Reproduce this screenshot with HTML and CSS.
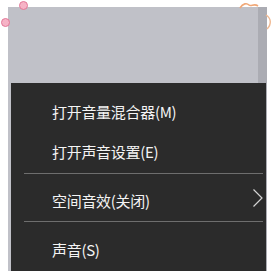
FILE: index.html
```html
<!DOCTYPE html>
<html lang="zh">
<head>
<meta charset="utf-8">
<link rel="stylesheet" href="styles.css">
</head>
<body>
<div class="stage">
  <div class="panel">
    <div class="menu">
      <div class="item">打开音量混合器(M)</div>
      <div class="item">打开声音设置(E)</div>
      <div class="sep sep-1"></div>
      <div class="item has-sub">空间音效(关闭)
        <svg class="chev" width="12" height="20" viewBox="0 0 12 20"><polyline points="1.5,1.5 10,10 1.5,18.5" fill="none" stroke="#d4d4d4" stroke-width="1.2"/></svg>
      </div>
      <div class="sep sep-2"></div>
      <div class="item">声音(S)</div>
    </div>
  </div>
  <span class="dot dot-a"></span>
  <span class="dot dot-b"></span>
  <svg class="squig squig-a" width="20" height="10" viewBox="0 0 20 10"><path d="M1 7 C4 2, 8 2, 10 4 C12 6, 15 2, 19 5" fill="none" stroke="#f0a878" stroke-width="1.6"/></svg>
  <svg class="squig squig-b" width="8" height="16" viewBox="0 0 8 16"><path d="M1 1 C6 4, 7 10, 2 15" fill="none" stroke="#f0b890" stroke-width="1.4"/></svg>
</div>
</body>
</html>
```
FILE: styles.css
```css
html, body {
  margin: 0;
  padding: 0;
  background: #ffffff;
}
body {
  width: 275px;
  height: 271px;
  overflow: hidden;
  font-family: "Noto Sans CJK SC", "Noto Sans", sans-serif;
}
.stage {
  position: relative;
  width: 275px;
  height: 271px;
  padding: 7px 0 0 8px;
  box-sizing: border-box;
}
.panel {
  width: 259px;
  height: 264px;
  box-sizing: border-box;
  background: linear-gradient(to right, #c0c1c8 0, #c0c1c8 250px, #abacb3 250px, #abacb3 259px);
  padding: 76px 0 0 3px;
  overflow: hidden;
}
.menu {
  width: 255px;
  height: 200px;
  background: #2b2b2b;
  padding-top: 8px;
  box-sizing: border-box;
  color: #f4f4f4;
}
.item {
  height: 40px;
  display: flex;
  align-items: center;
  padding-left: 41px;
  font-size: 15px;
  letter-spacing: -0.3px;
}
.has-sub {
  justify-content: space-between;
  padding-right: 2px;
}
.chev {
  display: block;
  margin-top: -4px;
}
.sep {
  height: 1px;
  background: #6e6e6e;
  margin: 2px 3px 6px 13px;
}
.sep-2 {
  margin: 1px 3px 7px 13px;
}
.dot {
  position: absolute;
  width: 7px;
  height: 7px;
  border-radius: 50%;
  background: #f6b3c6;
  border: 1px solid #e27898;
}
.dot-a { left: 19px; top: 1px; }
.dot-b { left: 1px; top: 18px; }
.squig {
  position: absolute;
  display: block;
}
.squig-a { left: 239px; top: 1px; }
.squig-b { left: 265px; top: 14px; }
```
